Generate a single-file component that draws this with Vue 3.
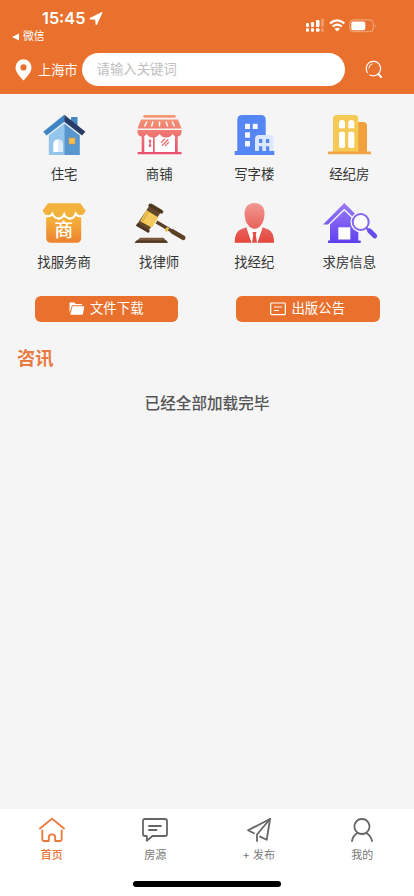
<script setup>
const services = [
  { id: 'home', label: '住宅' },
  { id: 'shop', label: '商铺' },
  { id: 'office', label: '写字楼' },
  { id: 'agency', label: '经纪房' },
  { id: 'provider', label: '找服务商' },
  { id: 'lawyer', label: '找律师' },
  { id: 'agent', label: '找经纪' },
  { id: 'wanted', label: '求房信息' },
]
const tabs = [
  { label: '首页', active: true, paths: ['M1 11.5 L13 1.6 L25 11.5', 'M3.3 13.5 V22 Q3.3 24 5.3 24 H9.8 V20.5 Q9.8 17.3 13 17.3 Q16.2 17.3 16.2 20.5 V24 H20.7 Q22.7 24 22.7 22 V13.5'] },
  { label: '房源', paths: ['M3 2 H23 Q25 2 25 4 V17 Q25 19 23 19 H10.5 L4.8 23.7 V19 H3 Q1 19 1 17 V4 Q1 2 3 2 Z', 'M7 9 H19', 'M7 13 H14.5'] },
  { label: '+ 发布', paths: ['M8 16.2 L2 13.2 L24 2 L20.7 22.8 L14 19.6', 'M24 2 L11 17.5 V24'] },
  { label: '我的', paths: ['M13 2 A7.5 7.5 0 1 1 12.9 2 M8.7 15.8 Q4 18.5 3 24 M18 16.4 Q22 19 23 24'] },
]
</script>

<template>
  <div class="screen">
    <header class="header">
      <div class="status">
        <div class="clock">
          <div class="time">15:45
            <svg width="14" height="14" viewBox="0 0 14 14"><path d="M13.4.9 8 12.4Q7.1 13.8 6.6 12.2L6.2 7.8 1.4 7.5Q-.2 7 1 6.1L12.2.2Q13.9-.2 13.4.9Z" fill="#fff" /></svg>
          </div>
          <div class="back">
            <svg width="7" height="8" viewBox="0 0 7 8"><path d="M0 4 7 .6V7.4Z" fill="#fff" /></svg>微信
          </div>
        </div>
        <svg class="signals" width="72" height="16" viewBox="0 0 72 16" fill="#fff">
          <rect x="1" y="6" width="3" height="4" rx="1" /><rect x="6" y="5" width="3" height="5" rx="1" /><rect x="11" y="3" width="3.5" height="7" rx="1" />
          <rect x="1" y="11.3" width="3" height="3.4" rx="1" /><rect x="6" y="11.3" width="3" height="3.4" rx="1" /><rect x="11" y="11.3" width="3.5" height="3.4" rx="1" />
          <g opacity=".28"><rect x="16" y="1.7" width="3" height="8.3" rx="1" /><rect x="16" y="11.3" width="3" height="3.4" rx="1" /></g>
          <g fill="none" stroke="#fff" stroke-width="2.1"><path d="M25 6.4Q32 .2 39.4 6.4" /><path d="M27.7 9.5Q32.2 5.6 36.8 9.5" /></g>
          <path d="M29.5 11.8Q32.2 9.8 35 11.8L32.2 14.5Z" />
          <rect x="44.8" y="2.9" width="23.5" height="11.8" rx="3.5" fill="none" stroke="#fff" stroke-opacity=".42" />
          <rect x="46.3" y="4.4" width="14" height="8.8" rx="2" /><path d="M69.8 6.8Q71.5 8.7 69.8 10.7Z" opacity=".45" />
        </svg>
      </div>
      <div class="search-row">
        <svg class="pin" width="17" height="22" viewBox="0 0 17 22"><path fill="#fff" fill-rule="evenodd" d="M8.5.3A8 8 0 0 1 16.5 8.4C16.5 13 12.5 17 8.5 21.6 4.5 17 .5 13 .5 8.4A8 8 0 0 1 8.5.3ZM8.5 5.3A3.1 3.1 0 1 0 8.5 11.5 3.1 3.1 0 0 0 8.5 5.3Z" /></svg>
        <span class="city">上海市</span>
        <div class="search">请输入关键词</div>
        <svg class="lens" width="18" height="19" viewBox="0 0 18 19" fill="none" stroke="#fff" stroke-linecap="round"><path d="M2.4 12.5A7.2 7.2 0 1 1 12.6 14.4Q9 16.8 4.8 15" stroke-width="1.2" /><path d="M3.8 8Q4 4.8 7.3 3.8" /><path d="M13.4 14 16 17" stroke-width="2" /></svg>
      </div>
    </header>

    <main class="content">
      <section class="services">
        <div v-for="item in services" :key="item.id" class="service">
          <svg width="60" height="44" viewBox="0 0 60 44">
            <defs>
              <linearGradient id="pink" gradientUnits="userSpaceOnUse" x1="0" y1="2" x2="0" y2="42"><stop stop-color="#f39a75" /><stop offset="1" stop-color="#e94c6e" /></linearGradient>
              <linearGradient id="amber" x1="0" y1="0" x2="0" y2="1"><stop stop-color="#f5b63c" /><stop offset="1" stop-color="#ed822d" /></linearGradient>
              <linearGradient id="red" gradientUnits="userSpaceOnUse" x1="0" y1="2" x2="0" y2="42"><stop stop-color="#f29994" /><stop offset=".65" stop-color="#e8615a" /><stop offset="1" stop-color="#e5443b" /></linearGradient>
              <linearGradient id="violet" gradientUnits="userSpaceOnUse" x1="0" y1="2" x2="0" y2="42"><stop stop-color="#9b7cf6" /><stop offset="1" stop-color="#6040ee" /></linearGradient>
            </defs>
            <template v-if="item.id === 'home'">
              <path d="M37 4H43.5V16L37 11Z" fill="#4388c4" />
              <path d="M14.8 18 30.3 5.5V42H14.8Z" fill="#94c6eb" /><path d="M30.3 5.5 45.8 18V42H30.3Z" fill="#5796cf" />
              <path d="M14.8 19.5 30.3 7.3 45.8 19.5V22.5L30.3 10.5 14.8 22.5Z" fill="#e2effa" />
              <path d="M30.3 1.8 9.2 18.8 12.6 22.5 30.3 8.8Z" fill="#4184c4" /><path d="M30.3 1.8 51.4 18.8 48 22.5 30.3 8.8Z" fill="#293c69" />
              <path d="M19.3 39V31.2Q19.3 26.5 24 26.5T28.7 31.2V39Z" fill="#fff" /><path d="M24 26.5Q28.7 26.8 28.7 31.2V39H24Z" fill="#ddecf8" />
              <rect x="35" y="25" width="6" height="6" fill="#fbc249" stroke="#c6996a" stroke-width=".7" />
            </template>
            <template v-else-if="item.id === 'shop'">
              <rect x="14.3" y="2" width="32.4" height="2.8" rx="1" fill="url(#pink)" /><path d="M12 6.5H49L52.5 15.5H8.5Z" fill="url(#pink)" />
              <path d="M18 8.5 15.5 13.5M24 8.5 22.5 13.5M30.5 8.5V13.5M37 8.5 38.7 13.5M43 8.5 45.6 13.5" stroke="#fff" stroke-width="1.4" />
              <rect x="14" y="22" width="33.5" height="18" fill="#fff" />
              <path d="M8.5 17H52.5V19Q52 23.5 48.3 23.5 45 23.5 43.5 21 41.5 24.5 37.2 24.5 33 24.5 30.5 21 28 24.5 24 24.5 20 24.5 17.5 21 16 23.5 13 23.5 9 23.5 8.5 19Z" fill="url(#pink)" />
              <path d="M12.7 22H15.3V40H12.7ZM46 22H48.7V40H46ZM24 24H25.7V40H24ZM8.7 39H52.5V41.3H8.7Z" fill="url(#pink)" />
              <path d="M21 27V33.5" stroke="#e96776" stroke-width="1.4" /><circle cx="21" cy="28" r="1.4" fill="#e96776" /><circle cx="21" cy="32.7" r="1.4" fill="#e96776" />
              <path d="M32 29.7 36 25.7M33 32.8 39.3 26.5M36 33 40 29" stroke="#eb7179" stroke-width="1.3" />
            </template>
            <template v-else-if="item.id === 'office'">
              <path d="M13.3 38V7Q13.3 2 18.3 2H36.7Q41.7 2 41.7 7V38H50.3V42H10.7V38Z" fill="#5685f6" />
              <path d="M21 10.7H26V16H21ZM28.7 10.7H33.7V16H28.7ZM21 19.3H26V24.7H21ZM21 28H26V33.5H21Z" fill="#f3f6ff" />
              <path d="M31 38V26Q31 22 35 22H45.5Q49.5 22 49.5 26V38Z" fill="#dce8fd" /><path d="M35 26H38.3V30H35ZM42 26H45.2V30H42ZM35 33.3H38.3V38H35ZM42 33.3H45.2V38H42Z" fill="#5685f6" />
            </template>
            <template v-else-if="item.id === 'agency'">
              <path d="M38 9H44Q48 9 48 13V39H38Z" fill="#f0a03d" /><path d="M14 39V6Q14 2 18 2H35.3Q39.3 2 39.3 6V39Z" fill="#f4ca55" /><rect x="9" y="38.5" width="43" height="2.8" rx=".6" fill="#f0a545" />
              <path d="M20 15.3V10Q20 7 23 7T26 10V15.3ZM29.3 15.3V10Q29.3 7 32.3 7T35.3 10V15.3Z" fill="#fff" /><rect x="20" y="18.7" width="6" height="16.3" rx="1.7" fill="#fff" /><rect x="29.3" y="18.7" width="6" height="16.3" rx="1.7" fill="#fff" />
            </template>
            <template v-else-if="item.id === 'provider'">
              <path d="M12.2 15.5 19.5 15 25 19 30 16 36 19 41 15 47.2 15.5V37Q47.2 41.7 42.5 41.7H17Q12.2 41.7 12.2 37Z" fill="url(#amber)" />
              <path d="M14 2.3H46.3L51.6 9.5Q50 14.5 46 14.3 43 14.2 41.5 12.3 39.5 16.8 36 16.8 32.5 16.8 30.2 12.5 27.5 16.8 24.5 16.8 21 16.8 18.5 12.3 17 14.3 14.5 14.3 10 14 8.7 9.5Z" fill="#f3b23c" />
              <path d="M12 15.2Q16.5 16 18.3 12.6 20.5 17.5 24.5 17.5T30.2 13Q32 17.5 36 17.5T41.6 12.6Q43.5 16 48 15.2" fill="none" stroke="#fff" stroke-width="2" />
              <text x="29.8" y="36" text-anchor="middle" class="stamp">商</text>
            </template>
            <template v-else-if="item.id === 'lawyer'">
              <path d="M27.5 21 55 37.2" stroke="#5c4025" stroke-width="3.2" /><path d="M43.5 30.5 54.2 36.8" stroke="#5c4025" stroke-width="4.6" stroke-linecap="round" />
              <path d="M38 25.8 40.3 27.2 37.9 31.1 35.6 29.8Z" fill="#edbf48" />
              <path d="M22 2.3 33.3 9 18.7 31 7.3 24.5Z" fill="#63472a" /><path d="M20.6 2.5 34.6 10.3 33 13 19 4.8ZM8.4 22.3 21 29.7 19.5 32 6.9 24.7Z" fill="#4e351f" />
              <path d="M17.3 9 29.4 16.4 23 26.8 11.3 20.3Z" fill="#f3cb5c" /><path d="M19 11 13.5 20.3" stroke="#e0aa39" stroke-width="1.5" />
              <path d="M11 36.7H34.5L39 41.8H5.7Z" fill="#79583b" /><path d="M7.4 39.6H37.2L39 41.8H5.7Z" fill="#4e351f" />
            </template>
            <template v-else-if="item.id === 'agent'">
              <path d="M30.6 2C37 2 40.7 6.3 40.5 13 40.2 21.5 36 27.7 30.6 27.7S20.9 21.5 20.6 13C20.4 6.3 24.2 2 30.6 2Z" fill="url(#red)" />
              <path d="M22.5 26.2 28 41.7H10.7Q10.7 31 16.5 28.6ZM38.5 26.2 33 41.7H50Q50 31 44.3 28.6Z" fill="url(#red)" />
              <path d="M22.5 26.5Q30.5 34 38.5 26.5L33.5 41.7H27.5Z" fill="#fff" /><path d="M28.5 31H32.5L31.8 33.7 33 41.7H28L29.2 33.7Z" fill="#e54c43" />
            </template>
            <template v-else>
              <path d="M11 22 25.3 8.5 39.3 22V39.5H41.7V42H9V39.5H11Z" fill="url(#violet)" />
              <path d="M25.3 2 47 23.5H41.5L25.3 8 9.5 23.5H4Z" fill="url(#violet)" />
              <path d="M9.5 24 25.3 8.7 41 24" fill="none" stroke="#f5f5f5" stroke-width="1.2" />
              <path d="M19.3 26.3H31.3V38.5H19.3Z" fill="#fff" />
              <circle cx="41.7" cy="21" r="10.3" fill="#f5f5f5" /><circle cx="41.7" cy="21" r="8" fill="#fff" stroke="#8466f3" stroke-width="2" />
              <path d="M47.5 27 51 30.5" stroke="#765af1" stroke-width="2.2" /><path d="M50.5 29.8 55.8 35" stroke="#694df0" stroke-width="4.8" stroke-linecap="round" />
            </template>
          </svg>
          <span>{{ item.label }}</span>
        </div>
      </section>

      <section class="actions">
        <div class="action">
          <svg width="16" height="14" viewBox="0 0 16 14" fill="#fff"><path d="M.5 11V1Q.5.5 1 .5H5.5L7 2H12.5Q13.2 2 13.2 2.7V3.3H4.2Q3 3.3 2.7 4.3Z" /><path d="M4.3 4.3H15.3L13.8 12.8H1.3L3.3 5.1Q3.5 4.3 4.3 4.3Z" /></svg>文件下载
        </div>
        <div class="action">
          <svg width="16" height="14" viewBox="0 0 16 14" fill="none" stroke="#fff" stroke-width="1.2"><rect x=".7" y="1" width="14.6" height="11.7" rx="1" /><path d="M4 5H12M4 8.5H8.8" /></svg>出版公告
        </div>
      </section>

      <h2 class="title">咨讯</h2>
      <p class="finished">已经全部加载完毕</p>
    </main>

    <nav class="tabbar">
      <div class="tabs">
        <div v-for="tab in tabs" :key="tab.label" class="tab" :class="{ active: tab.active }">
          <svg width="26" height="26" viewBox="0 0 26 26" fill="none" stroke="currentColor" stroke-width="1.8" stroke-linecap="round" stroke-linejoin="round"><path v-for="d in tab.paths" :key="d" :d="d" /></svg>
          <span>{{ tab.label }}</span>
        </div>
      </div>
      <div class="indicator"></div>
    </nav>
  </div>
</template>

<style>
body { margin: 0; }
</style>

<style scoped>
.screen { display: flex; flex-direction: column; width: 414px; height: 896px; overflow: hidden; background: #f5f5f5; font-family: Inter, "Noto Sans CJK SC", sans-serif; color: #333; }
.header { flex: none; box-sizing: border-box; height: 94px; background: #e9712d; color: #fff; }
.status { display: flex; justify-content: space-between; height: 53px; }
.clock { padding: 8px 0 0 12px; }
.time { display: flex; align-items: center; gap: 4px; height: 21px; padding-left: 30px; font-size: 16.3px; font-weight: 600; line-height: 21px; }
.back { display: flex; align-items: center; gap: 4px; height: 14px; font-size: 10.8px; line-height: 14px; padding-top: 1px; }
.signals { margin: 17px 37px 0 0; }
.search-row { display: flex; align-items: center; height: 33px; padding-left: 15px; }
.pin { flex: none; }
.city { width: 44px; margin-left: 6px; font-size: 13.2px; white-space: nowrap; }
.search { box-sizing: border-box; width: 263px; height: 33px; padding-left: 14.5px; border-radius: 17px; background: #fff; color: #bfbfbf; font-size: 13.4px; line-height: 33px; }
.lens { margin-left: 20px; }
.content { flex: 1; }
.services { display: grid; grid-template-columns: repeat(4, 95.1px); grid-auto-rows: 88px; padding: 19px 0 0 16.5px; }
.service { display: flex; flex-direction: column; align-items: center; font-size: 13.4px; line-height: 20px; }
.service span { margin-top: 6.5px; }
.stamp { fill: #fff; font-size: 19px; font-weight: 500; font-family: "Noto Sans CJK SC", sans-serif; }
.actions { display: flex; justify-content: space-between; padding: 7px 34.5px 0; }
.action { display: flex; align-items: center; justify-content: center; gap: 5px; width: 143.5px; height: 25.5px; border-radius: 6px; background: #e9712d; color: #fff; font-size: 13.4px; line-height: 25px; }
.title { margin: 24px 0 0 17px; color: #e97a40; font-size: 18.3px; font-weight: 700; line-height: 25px; }
.finished { margin: 20px 0 0; color: #555; font-size: 15.6px; font-weight: 500; line-height: 25px; text-align: center; }
.tabbar { flex: none; height: 87px; background: #fff; }
.tabs { display: grid; grid-template-columns: repeat(4, 1fr); height: 72px; }
.tab { display: flex; flex-direction: column; align-items: center; padding-top: 8px; color: #666; font-size: 11px; line-height: 16px; }
.tab span { margin-top: 4px; color: #777; }
.tab.active, .tab.active span { color: #e9763b; }
.tab.active span { font-weight: 500; }
.indicator { width: 148px; height: 6px; margin: 0 auto; border-radius: 3px; background: #000; }
</style>
